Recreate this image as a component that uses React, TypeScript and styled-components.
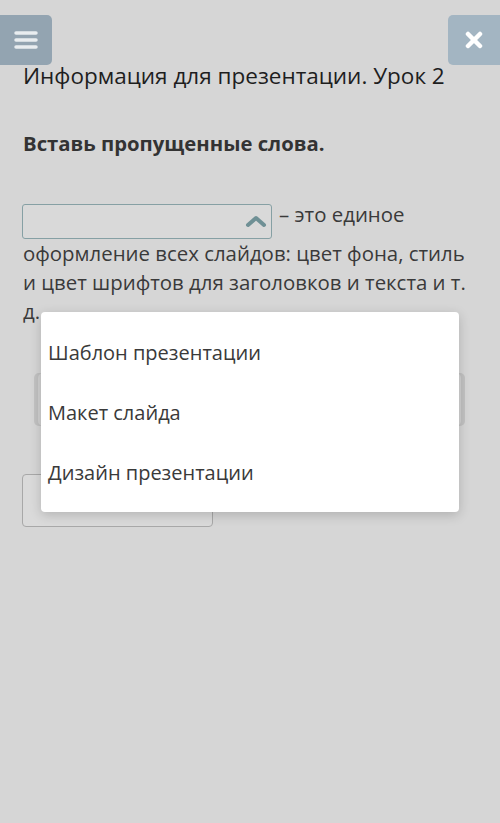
import React from 'react';
import styled, { createGlobalStyle } from 'styled-components';

const GlobalStyle = createGlobalStyle`
  body {
    margin: 0;
    background: #d6d6d6;
    font-family: "Open Sans", "Liberation Sans", sans-serif;
  }
`;

const Page = styled.div`
  position: relative;
  min-height: 823px;
  background: #d6d6d6;
  overflow: hidden;
`;

const TopBar = styled.div`
  display: flex;
  justify-content: space-between;
  padding-top: 15px;
`;

const BarButton = styled.button<{ side: 'left' | 'right' }>`
  width: 52px;
  height: 50px;
  border: none;
  padding: 0;
  display: flex;
  align-items: center;
  justify-content: center;
  background: ${p => (p.side === 'left' ? '#93a4b1' : '#a3b5c2')};
  border-radius: ${p => (p.side === 'left' ? '0 5px 5px 0' : '5px 0 0 5px')};
`;

const Content = styled.div`
  position: relative;
  padding: 0 23px;
`;

const Title = styled.h1`
  margin: -5px 0 0;
  font-size: 22.5px;
  font-weight: 400;
  line-height: 32px;
  color: #1e1e1e;
`;

const Instruction = styled.h2`
  margin: 37px 0 0;
  font-size: 20.3px;
  font-weight: 700;
  line-height: 28px;
  color: #333;
`;

const Question = styled.p`
  margin: 43px 8px 0 0;
  font-size: 20.4px;
  line-height: 29px;
  color: #3a3a3a;
`;

const Select = styled.span`
  display: inline-flex;
  align-items: center;
  justify-content: flex-end;
  box-sizing: border-box;
  width: 250px;
  height: 35px;
  margin-left: -1px;
  vertical-align: -6px;
  margin-right: 7px;
  padding-right: 4px;
  border: 1px solid #86a0a4;
  border-radius: 3px;
  background: #d9d9d9;
`;

const CheckButton = styled.div`
  margin: 47px 0 0 11px;
  width: 431px;
  height: 53px;
  border-radius: 5px;
  background: #d2d2d2;
  box-shadow: inset 4px 0 0 #c2c2c2, inset -4px 0 0 #c2c2c2;
`;

const AnswerBox = styled.div`
  margin: 48px 0 0 -1px;
  width: 191px;
  height: 53px;
  box-sizing: border-box;
  border: 1px solid #a8a8a8;
  border-radius: 4px;
  background: #dadada;
`;

const Menu = styled.ul`
  position: absolute;
  top: 312px;
  left: 41px;
  width: 418px;
  margin: 0;
  padding: 10px 0;
  list-style: none;
  background: #ffffff;
  border-radius: 4px;
  box-shadow: 0 3px 12px rgba(0, 0, 0, 0.18);
`;

const MenuItem = styled.li`
  height: 60px;
  display: flex;
  align-items: center;
  padding-left: 7px;
  font-size: 20px;
  color: #3a3a3a;
`;

const options = ['Шаблон презентации', 'Макет слайда', 'Дизайн презентации'];

export default function App() {
  return (
    <Page>
      <GlobalStyle />
      <TopBar>
        <BarButton side="left" aria-label="Меню">
          <svg width="24" height="20" viewBox="0 0 24 20">
            <g stroke="#e9edf0" strokeWidth="3.5" strokeLinecap="round">
              <line x1="2" y1="3" x2="22" y2="3" />
              <line x1="2" y1="10" x2="22" y2="10" />
              <line x1="2" y1="17" x2="22" y2="17" />
            </g>
          </svg>
        </BarButton>
        <BarButton side="right" aria-label="Закрыть">
          <svg width="18" height="18" viewBox="0 0 18 18">
            <g stroke="#ffffff" strokeWidth="4.5" strokeLinecap="round">
              <line x1="3" y1="3" x2="15" y2="15" />
              <line x1="15" y1="3" x2="3" y2="15" />
            </g>
          </svg>
        </BarButton>
      </TopBar>
      <Content>
        <Title>Информация для презентации. Урок 2</Title>
        <Instruction>Вставь пропущенные слова.</Instruction>
        <Question>
          <Select>
            <svg width="22" height="14" viewBox="0 0 22 14">
              <polyline
                points="3,11 11,4 19,11"
                fill="none"
                stroke="#6f9095"
                strokeWidth="4"
                strokeLinecap="round"
                strokeLinejoin="round"
              />
            </svg>
          </Select>
          – это единое оформление всех слайдов: цвет фона, стиль и цвет шрифтов для заголовков и текста и т. д.
        </Question>
        <CheckButton />
        <AnswerBox />
      </Content>
      <Menu>
        {options.map(o => (
          <MenuItem key={o}>{o}</MenuItem>
        ))}
      </Menu>
    </Page>
  );
}
